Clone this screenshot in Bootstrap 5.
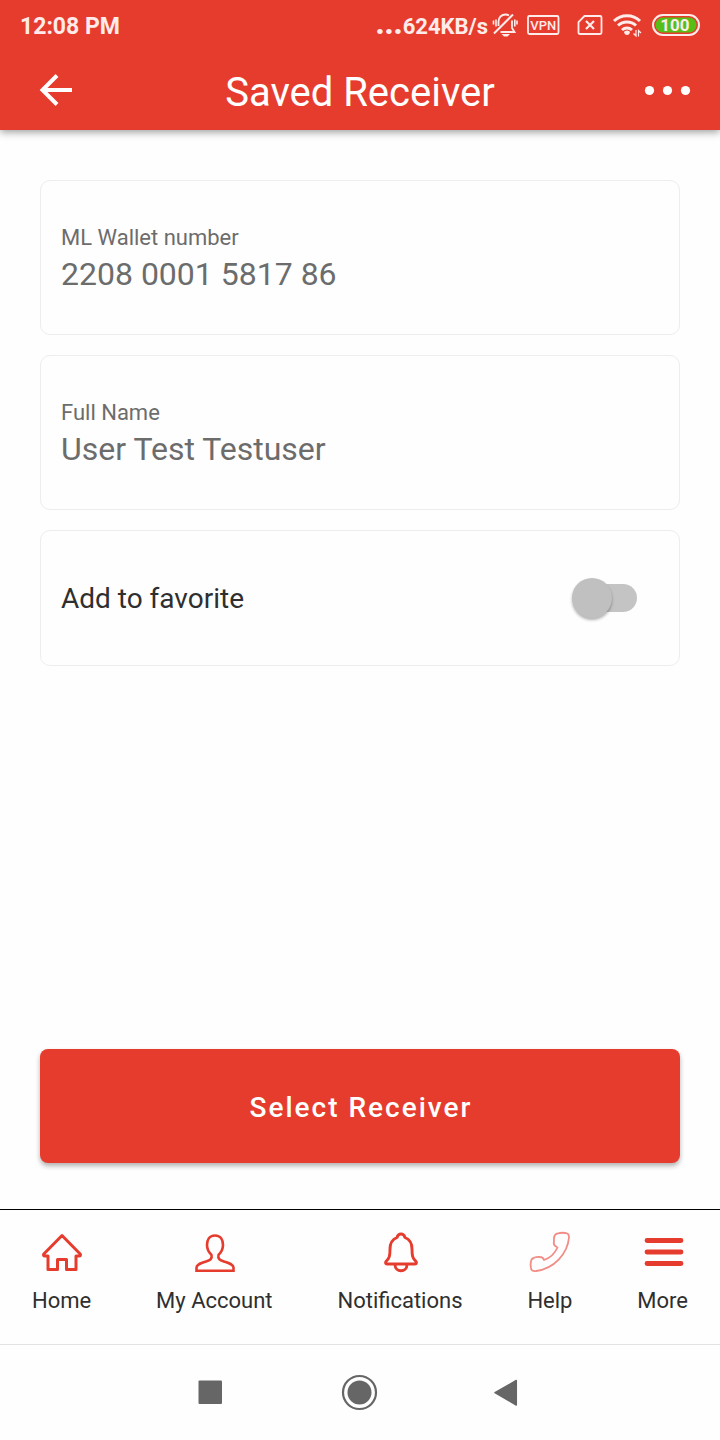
<!DOCTYPE html>
<html lang="en">
<head>
<meta charset="utf-8">
<meta name="viewport" content="width=device-width, initial-scale=1">
<title>Saved Receiver</title>
<link href="https://cdn.jsdelivr.net/npm/bootstrap@5.3.0/dist/css/bootstrap.min.css" rel="stylesheet">
<style>
  :root { --brand: #e63c2e; --status: #ffebe9; }
  body { font-family: Roboto, "Liberation Sans", sans-serif; background: #fefefe; color: #2f2f2f; }
  svg { display: block; flex: none; }
  .top-area { background: var(--brand); box-shadow: 0 2px 8px rgba(0,0,0,.4); }
  .status-bar { height: 50px; padding: 0 20px; color: var(--status); font-size: 23px; line-height: 28px; font-weight: 700; }
  .clock { padding-top: 3px; }
  .net-speed { font-size: 22px; }
  .dots { font-size: 30px; line-height: 28px; font-weight: 900; }
  .app-bar { height: 80px; padding: 0 24px 0 32px; color: #fff; }
  .app-bar h1 { font-size: 40px; line-height: 48px; font-weight: 400; padding-top: 5px; }
  .bare { background: none; border: 0; padding: 0; color: inherit; }
  main { padding: 50px 40px 46px; gap: 20px; }
  .field-list { gap: 20px; }
  .field-card { border: 1px solid #ededed; border-radius: 10px; background: #fefefe; padding: 41px 20px 40px; }
  .field-card dt { font-size: 22px; line-height: 32px; font-weight: 400; color: #6c6c6c; }
  .field-card dd { font-size: 32px; line-height: 40px; color: #6c6c6c; margin: 0; }
  .fav-card { padding: 45px 42px 45px 20px; font-size: 28px; line-height: 42px; }
  .fav-card label { padding-top: 2px; }
  .fav-switch { appearance: none; position: relative; width: 66px; height: 28px; margin: 0; border: 0; border-radius: 14px;
    background: linear-gradient(90deg, transparent 14px, #c4c4c4 14px); }
  .fav-switch::before { content: ""; position: absolute; left: 1px; top: -6px; width: 40px; height: 40px; border-radius: 50%; background: #c0c0c0; box-shadow: 0 2px 3px rgba(0,0,0,.3); }
  .fav-switch:checked { background: #f0a59f; }
  .fav-switch:checked::before { left: auto; right: 0; background: var(--brand); }
  .btn-select { --bs-btn-color: #fff; --bs-btn-bg: var(--brand); --bs-btn-hover-color: #fff; --bs-btn-hover-bg: #cf3529; --bs-btn-border-width: 0;
    --bs-btn-font-size: 28px; --bs-btn-line-height: 42px; --bs-btn-font-weight: 500; --bs-btn-border-radius: 8px;
    padding: 38px 10px 34px 12px; letter-spacing: 2px; box-shadow: 0 3px 5px rgba(0,0,0,.3); }
  .tab-bar { border-top: 1px solid #000; padding: 20px 32px 27px; }
  .tab-bar a { color: #2f2f2f; font-size: 22px; line-height: 32px; }
  .tab-bar svg { color: var(--brand); margin-bottom: 11px; }
  .system-bar { border-top: 1px solid #e2e2e2; height: 96px; gap: 98px; color: #666; }
</style>
</head>
<body class="d-flex flex-column min-vh-100">

<header class="top-area">
  <div class="status-bar d-flex align-items-center justify-content-between">
    <span class="clock">12:08 PM</span>
    <div class="d-flex align-items-center">
      <span class="net-speed"><span class="dots">...</span>624KB/s</span>
      <svg class="ms-1" width="26" height="26" viewBox="0 0 26 26" fill="none" stroke="currentColor" stroke-width="1.800">
        <path d="M6.500 14V9.500c0-4 3-7 7-7q2 0 3.500 1M20 8.500V16l2.500 4H8.500"/>
        <path d="M2 21.500 21 2.500" stroke-width="2"/>
        <path d="M9.500 22h8.500l-2.500 2.500h-3.500z" fill="currentColor" stroke="none"/>
        <path d="M1.500 8.500v4M4 7.500v7M25 8.500v4M22.800 7.500v7" stroke-width="1.600"/>
      </svg>
      <svg class="ms-2" width="35" height="22" viewBox="0 0 35 22" role="img" aria-label="VPN">
        <rect x="2" y="2" width="30.500" height="18" rx="1.500" fill="none" stroke="currentColor" stroke-width="1.800"/>
        <text x="17.200" y="15.500" text-anchor="middle" font-size="13" font-weight="500" fill="currentColor">VPN</text>
      </svg>
      <svg class="ms-3" width="26" height="22" viewBox="0 0 26 22" fill="none" stroke="currentColor" stroke-width="1.800">
        <path d="M7.500 2H23q1.500 0 1.500 1.500v15Q24.500 20 23 20H3q-1.500 0-1.500-1.500V8z"/>
        <path d="m9 7 8 8M17 7l-8 8" stroke-width="2.200"/>
      </svg>
      <svg class="ms-2" width="33" height="24" viewBox="0 0 33 24" fill="none" stroke="currentColor" stroke-width="3">
        <path d="M3 8a18.500 18.500 0 0 1 26 0M7 12.500a13 13 0 0 1 18 0M11 17a7.500 7.500 0 0 1 10 0"/>
        <path d="M16 17.500q2.500 0 3 1.500-.5 3-3 3t-3-3q.5-1.500 3-1.500z" fill="currentColor" stroke="none"/>
        <path d="M25 17v6l-2.500-2.500M27.500 23.500v-6l2.500 2.500" stroke-width="1.200"/>
      </svg>
      <svg class="ms-2" width="48" height="22" viewBox="0 0 48 22" role="img" aria-label="Battery 100">
        <rect x="1" y="1" width="46" height="20" rx="10" fill="none" stroke="currentColor" stroke-width="2"/>
        <rect x="3.500" y="3.500" width="41" height="15" rx="7.500" fill="#56bf17"/>
        <text x="23" y="17" text-anchor="middle" font-size="17" font-weight="700" fill="currentColor">100</text>
      </svg>
    </div>
  </div>
  <div class="app-bar d-flex align-items-center justify-content-between">
    <button type="button" class="bare" aria-label="Back">
      <svg width="48" height="48" viewBox="0 0 48 48" fill="none" stroke="currentColor" stroke-width="4"><path d="M40 24H11M25 9.500 10.500 24 25 38.500"/></svg>
    </button>
    <h1 class="mb-0">Saved Receiver</h1>
    <button type="button" class="bare" aria-label="More options">
      <svg width="56" height="48" viewBox="0 0 56 48" fill="currentColor"><circle cx="9.500" cy="24.500" r="4.600"/><circle cx="27.500" cy="24.500" r="4.600"/><circle cx="45.500" cy="24.500" r="4.600"/></svg>
    </button>
  </div>
</header>

<main class="flex-grow-1 d-flex flex-column">
  <dl class="d-grid m-0 field-list">
    <div class="field-card">
      <dt>ML Wallet number</dt>
      <dd>2208 0001 5817 86</dd>
    </div>
    <div class="field-card">
      <dt>Full Name</dt>
      <dd>User Test Testuser</dd>
    </div>
  </dl>
  <div class="field-card fav-card d-flex align-items-center justify-content-between">
    <label for="favorite">Add to favorite</label>
    <input class="fav-switch" type="checkbox" role="switch" id="favorite">
  </div>
  <button type="button" class="btn btn-select w-100 mt-auto">Select Receiver</button>
</main>

<nav class="tab-bar d-flex justify-content-between" aria-label="Main">
  <a href="#home" class="d-flex flex-column align-items-center text-decoration-none">
    <svg width="44" height="44" viewBox="0 0 44 44" fill="none" stroke="currentColor" stroke-width="3" stroke-linejoin="round"><path d="M22 5.500 3.800 24q-1 2 1.200 2h3v13.500h9.500V29.500h9v10H36V26h3q2.200 0 1.200-2z"/></svg>
    Home
  </a>
  <a href="#account" class="d-flex flex-column align-items-center text-decoration-none">
    <svg width="44" height="44" viewBox="0 0 44 44" fill="none" stroke="currentColor" stroke-width="2.600"><path d="M22 5.500c-6 0-8 5-8 9.500 0 4 1.500 7 4.500 10 1 4-1.500 5-5.500 6.500C7 33.500 3.500 34.500 3.500 37.500v3.200h37v-3.200c0-3-3.500-4-9.500-6-4-1.500-6.500-2.500-5.500-6.500 3-3 4.500-6 4.500-10C30 10.500 28 5.500 22 5.500z" transform="translate(1 0)"/></svg>
    My Account
  </a>
  <a href="#notifications" class="d-flex flex-column align-items-center text-decoration-none">
    <svg width="44" height="44" viewBox="0 0 44 44" fill="none" stroke="currentColor" stroke-width="2.900" stroke-linejoin="round"><path d="M23 4q-3 0-4 3.500c-5 2-7 6-7 11.500 0 7-.5 9-4 12.500-1 2 0 2.500 1.500 2.500h27c1.500 0 2.500-.5 1.500-2.500-3.500-3.500-4-5.500-4-12.500 0-5.500-2-9.500-7-11.500q-1-3.500-4-3.500zM17 34.500c0 4 3 6.300 6 6.300s6-2.300 6-6.300"/></svg>
    Notifications
  </a>
  <a href="#help" class="d-flex flex-column align-items-center text-decoration-none">
    <svg width="44" height="44" viewBox="0 0 44 44" fill="none" stroke="#f28d85" stroke-width="1.800" stroke-linejoin="round"><path d="M29.500 3.500q5-1.500 10 0 1.500 1 1.500 4C39.500 23.500 26.500 38.500 8 41q-5 .5-5-3-1-4 .5-8.500 3-3 8.500-2.500 3 0 4 3c6-2 11-7 13.500-12.500-3-1.500-4.500-3-3.500-5.500-.5-5 .5-8 3.500-8.500z"/></svg>
    Help
  </a>
  <a href="#more" class="d-flex flex-column align-items-center text-decoration-none">
    <svg width="44" height="44" viewBox="0 0 44 44" stroke="currentColor" stroke-width="4.800" stroke-linecap="round"><path d="M6 10.500h34M6 22h34M6 33.500h34"/></svg>
    More
  </a>
</nav>

<div class="system-bar d-flex align-items-center justify-content-center">
  <button type="button" class="bare" aria-label="Recent apps"><svg width="50" height="50" viewBox="0 0 50 50" fill="currentColor"><rect x="11.500" y="12.500" width="23.500" height="23.500" rx="1"/></svg></button>
  <button type="button" class="bare" aria-label="Home screen"><svg width="50" height="50" viewBox="0 0 50 50" fill="currentColor"><circle cx="24.500" cy="24.500" r="16.500" fill="none" stroke="currentColor" stroke-width="2.200"/><circle cx="24.500" cy="24.500" r="12"/></svg></button>
  <button type="button" class="bare" aria-label="System back"><svg width="50" height="50" viewBox="0 0 50 50" fill="currentColor" stroke="currentColor" stroke-width="1.500" stroke-linejoin="round"><path d="M12 24.700 33.300 12.500v24.500z"/></svg></button>
</div>

<script src="https://cdn.jsdelivr.net/npm/bootstrap@5.3.0/dist/js/bootstrap.bundle.min.js"></script>
</body>
</html>
